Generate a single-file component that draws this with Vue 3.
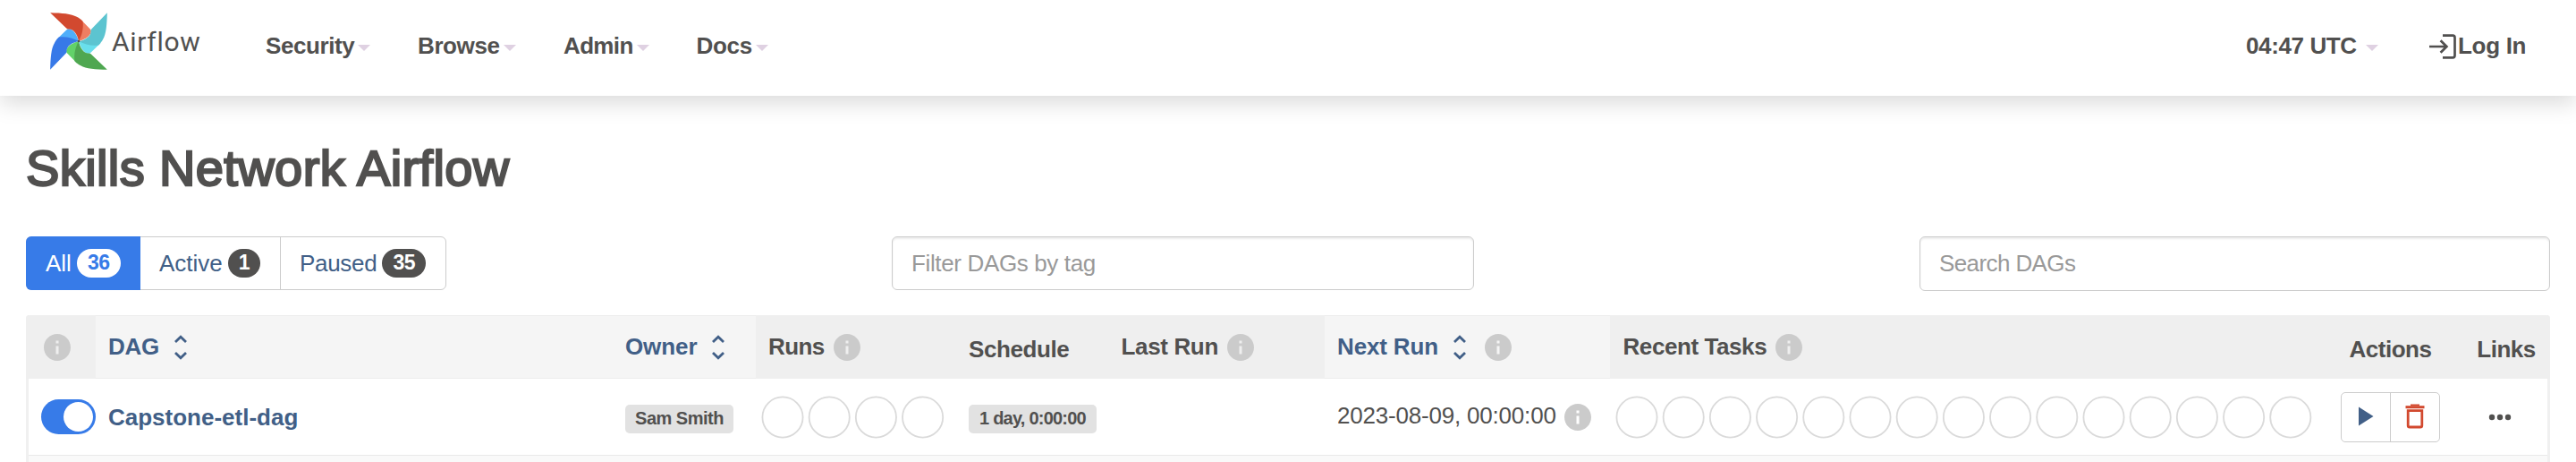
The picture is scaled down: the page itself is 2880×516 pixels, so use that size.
<script setup>
const menu = [
  { label: 'Security', width: 170, tracking: -0.41 },
  { label: 'Browse', width: 163, tracking: -0.4 },
  { label: 'Admin', width: 148.5, tracking: -0.65 },
  { label: 'Docs', width: 120, tracking: -0.3 },
]

const blades = [
  { dark: '#d2492f', light: '#ef7e62', angle: 0 },
  { dark: '#5cc4d0', light: '#69dfec', angle: 90 },
  { dark: '#4fa751', light: '#62d269', angle: 180 },
  { dark: '#3779e8', light: '#4faefa', angle: 270 },
]

const columns = [
  { key: 'toggle', info: true },
  { key: 'dag', label: 'DAG', sort: true, tracking: -0.3 },
  { key: 'owner', label: 'Owner', sort: true, tracking: -0.1 },
  { key: 'runs', label: 'Runs', info: true, tracking: -0.6 },
  { key: 'schedule', label: 'Schedule', low: true, tracking: -0.4 },
  { key: 'last', label: 'Last Run', info: true, tracking: -0.35 },
  { key: 'next', label: 'Next Run', sort: true, info: true, tracking: -0.15 },
  { key: 'recent', label: 'Recent Tasks', info: true, tracking: -0.42 },
  { key: 'actions', label: 'Actions', low: true, tracking: -0.5 },
  { key: 'links', label: 'Links', low: true, tracking: -0.5 },
]

const infoPath =
  'M12 2C6.48 2 2 6.48 2 12s4.48 10 10 10 10-4.48 10-10S17.52 2 12 2zm1 15h-2v-6h2v6zm0-8h-2V7h2v2z'
</script>

<template>
  <div class="page">
    <header class="nav">
      <div class="brand">
        <svg class="pinwheel" viewBox="168.5 42.5 192 192">
          <g v-for="b in blades" :key="'l' + b.angle" :transform="`rotate(${b.angle} 264.5 138.5)`">
            <path :fill="b.light" d="M270 64L303 98C311 106 305 127 264.5 138.5Z" />
          </g>
          <g v-for="b in blades" :key="'d' + b.angle" :transform="`rotate(${b.angle} 264.5 138.5)`">
            <path :fill="b.dark" d="M169 43C208 44 240 46 258 57C266 61 272 66 278 72C281 95 276 118 264.5 138.5C260 115 247 96 229 98Q226 98 223 95Z" />
          </g>
          <circle cx="264.5" cy="138.5" r="4" fill="#51504f" />
        </svg>
        <span class="wordmark">Airflow</span>
      </div>
      <nav class="menu">
        <a v-for="m in menu" :key="m.label" class="menu-item" :style="{ width: m.width + 'px' }">
          <span :style="{ letterSpacing: m.tracking + 'px' }">{{ m.label }}</span>
          <i class="caret"></i>
        </a>
      </nav>
      <div class="right">
        <a class="clock"><span>04:47 UTC</span><i class="caret"></i></a>
        <a class="login">
          <svg class="login-icon" viewBox="0 0 30 28" fill="none" stroke="#51504f" stroke-width="2.7">
            <path d="M15 1.6H26.2Q28.5 1.6 28.5 3.9V24Q28.5 26.3 26.2 26.3H15" />
            <path d="M0 14H19M12.6 7.2L19.4 14L12.6 20.8" />
          </svg>
          <span>Log In</span>
        </a>
      </div>
    </header>

    <main class="content">
      <h2 class="title">Skills Network Airflow</h2>

      <div class="toolbar">
        <div class="tabs">
          <a class="tab all">All<b class="count">36</b></a>
          <a class="tab active">Active<b class="count">1</b></a>
          <a class="tab paused"><span>Paused</span><b class="count">35</b></a>
        </div>
        <input class="field filter" placeholder="Filter DAGs by tag" />
        <input class="field search" placeholder="Search DAGs" />
      </div>

      <div class="table">
        <div class="row head">
          <div
            v-for="c in columns"
            :key="c.key"
            class="th"
            :class="[c.key, { sortable: c.sort, low: c.low }]"
          >
            <span v-if="c.label" :style="{ letterSpacing: c.tracking + 'px' }">{{ c.label }}</span>
            <svg v-if="c.sort" class="sort" viewBox="0 0 14 28" fill="none" stroke="#415f87" stroke-width="2.8">
              <path d="M1 8L7 2.2L13 8M1 20L7 25.8L13 20" />
            </svg>
            <svg v-if="c.info" class="info" viewBox="2 2 20 20"><path :d="infoPath" /></svg>
          </div>
        </div>

        <div class="row body">
          <div class="td toggle"><span class="switch"><i class="knob"></i></span></div>
          <div class="td dag">Capstone-etl-dag</div>
          <div class="td owner"><span class="label sam">Sam Smith</span></div>
          <div class="td runs">
            <svg class="circles" width="210" height="48">
              <circle v-for="n in 4" :key="n" :cx="24 + (n - 1) * 52.2" cy="24" r="22.6" />
            </svg>
          </div>
          <div class="td schedule"><span class="label every">1 day, 0:00:00</span></div>
          <div class="td last"></div>
          <div class="td next">
            <span class="date">2023-08-09, 00:00:00</span>
            <svg class="info" viewBox="2 2 20 20"><path :d="infoPath" /></svg>
          </div>
          <div class="td recent">
            <svg class="circles" width="780" height="48">
              <circle v-for="n in 15" :key="n" :cx="24 + (n - 1) * 52.2" cy="24" r="22.6" />
            </svg>
          </div>
          <div class="td actions">
            <div class="buttons">
              <a class="btn">
                <svg width="18" height="22" viewBox="0 0 18 22"><path d="M1 0.5V21.5L17.5 11Z" fill="#415f87" /></svg>
              </a>
              <a class="btn">
                <svg width="22" height="28" viewBox="0 0 22 28" fill="none" stroke="#d2492f">
                  <path d="M0.5 3.7H21.5" stroke-width="3" />
                  <path d="M6 1.4H16" stroke-width="1.8" />
                  <path d="M3.2 7.7H18.8V24.2Q18.8 26 17 26H5Q3.2 26 3.2 24.2Z" stroke-width="2.8" />
                </svg>
              </a>
            </div>
          </div>
          <div class="td links">
            <svg width="26" height="8" fill="#51504f">
              <circle cx="4" cy="4" r="3.2" /><circle cx="13" cy="4" r="3.2" /><circle cx="22" cy="4" r="3.2" />
            </svg>
          </div>
        </div>
        <div class="next-row"></div>
      </div>
    </main>
  </div>
</template>

<style>
body {
  background: #fff;
  overflow: hidden;
}
</style>

<style scoped>
.page {
  width: 2880px;
  height: 516px;
  overflow: hidden;
  background: #fff;
  color: #51504f;
  font-family: 'Liberation Sans', Arial, sans-serif;
  font-size: 26px;
  white-space: nowrap;
}
.page * {
  box-sizing: border-box;
}
svg {
  display: block;
  flex: none;
}
.nav {
  height: 107px;
  padding: 0 0 5px 56px;
  display: flex;
  align-items: center;
  font-weight: 700;
  background: #fff;
  box-shadow: 0 8px 24px rgba(0, 0, 0, 0.15);
}
.brand {
  width: 241px;
  margin-bottom: 10px;
  display: flex;
  align-items: center;
}
.pinwheel {
  width: 64px;
  height: 64px;
}
.wordmark {
  margin-left: 5px;
  padding-top: 1px;
  font-family: Roboto, sans-serif;
  font-size: 30px;
  font-weight: 400;
  letter-spacing: 0.7px;
}
.menu {
  display: flex;
}
.menu-item,
.clock,
.login {
  display: flex;
  align-items: center;
}
.caret {
  margin: 5px 0 0 4px;
  border-top: 7px solid #dfd1e2;
  border-left: 7px solid transparent;
  border-right: 7px solid transparent;
}
.right {
  margin-left: auto;
  display: flex;
  width: 369px;
}
.clock {
  width: 205px;
  letter-spacing: -0.38px;
}
.clock .caret {
  margin-left: 10px;
}
.login {
  letter-spacing: -0.3px;
}
.login-icon {
  width: 30px;
  height: 28px;
  margin: 2px 2px 0 0;
}
.content {
  padding: 51px 29px 0;
}
.title {
  margin: 0 0 46px;
  height: 60px;
  line-height: 60px;
  font-size: 56px;
  font-weight: 400;
  letter-spacing: 0.39px;
  -webkit-text-stroke: 2.3px #51504f;
  font-variant-ligatures: none;
}
.toolbar {
  display: flex;
  justify-content: space-between;
  height: 60px;
}
.tabs {
  display: flex;
  width: 470px;
  border: 1px solid #ccc;
  border-radius: 6px;
  color: #415f87;
}
.tab {
  display: flex;
  align-items: center;
}
.tab.all {
  width: 128px;
  margin: -1px 0 -1px -1px;
  padding-left: 22px;
  color: #fff;
  background: #377be8;
  border-radius: 6px 0 0 6px;
}
.tab.active {
  width: 157px;
  padding-left: 21px;
  border-right: 1px solid #ccc;
}
.tab.paused {
  padding-left: 21px;
}
.tab.paused span {
  letter-spacing: -0.3px;
}
.count {
  margin-left: 6px;
  height: 32px;
  padding: 0 12px;
  line-height: 31px;
  border-radius: 16px;
  font-size: 23px;
  letter-spacing: -0.4px;
  color: #fff;
  background: #51504f;
}
.all .count {
  color: #377be8;
  background: #fff;
}
.field {
  height: 60px;
  padding: 0 21px;
  border: 1px solid #ccc;
  border-radius: 6px;
  outline: none;
  background: #fff;
  box-shadow: inset 0 2px 2px rgba(0, 0, 0, 0.075);
  font: 26px 'Liberation Sans', Arial, sans-serif;
}
.field::placeholder {
  color: #999;
  opacity: 1;
}
.filter {
  width: 651px;
  letter-spacing: -0.36px;
}
.search {
  width: 705px;
  height: 61px;
  letter-spacing: -0.6px;
}
.table {
  margin-top: 28px;
  height: 180px;
  border: solid #f0f0f0;
  border-width: 0 3px;
  border-radius: 4px 4px 0 0;
}
.row {
  display: grid;
  grid-template-columns: 75px 578px 160px 223px 171px 242px 319px 794px 157px 97px;
}
.row > div {
  display: flex;
  align-items: center;
  padding-left: 14px;
}
.head {
  height: 71px;
  margin: 0 -3px;
  padding: 0 3px;
  font-weight: 700;
  background: #efefef;
  border-radius: 4px 4px 0 0;
}
.th.sortable {
  color: #415f87;
  background: #f5f5f5;
  border: solid #ededed;
  border-width: 1px 0;
}
.row > .low {
  padding-top: 6px;
}
.th .info {
  margin-left: 10px;
}
.row > .th.last,
.row > .th.recent {
  padding-left: 14.5px;
}
.row > .th.toggle {
  padding: 0 0 0 17px;
}
.th.toggle .info {
  margin: 0;
}
.info {
  width: 30px;
  height: 30px;
  fill: #cbcbcb;
}
.sort {
  width: 14px;
  height: 28px;
  margin-left: 17px;
}
.next .sort + .info {
  margin-left: 21px;
}
.row > .schedule {
  padding-left: 15px;
}
.row > .actions,
.row > .links {
  justify-content: center;
  padding-left: 0;
}
.row > .th.links {
  padding-left: 5px;
}
.body {
  height: 85px;
}
.row > .td.toggle {
  padding: 0 0 0 14px;
}
.switch {
  width: 61px;
  height: 39px;
  padding: 3px;
  display: flex;
  justify-content: flex-end;
  border-radius: 20px;
  background: #377be8;
}
.knob {
  width: 33px;
  height: 33px;
  border-radius: 50%;
  background: #fff;
}
.row > .td.dag {
  padding-top: 1px;
  color: #415f87;
  font-weight: 700;
}
.label {
  height: 32px;
  margin-top: 5px;
  line-height: 31px;
  border-radius: 5px;
  text-align: center;
  font-size: 20px;
  font-weight: 700;
  background: #e2e2e2;
}
.sam {
  width: 121px;
  letter-spacing: -0.5px;
}
.every {
  width: 143px;
  letter-spacing: -0.77px;
}
.row > .td.runs,
.row > .td.recent {
  padding-left: 5.5px;
}
.circles {
  fill: none;
  stroke: #dadada;
  stroke-width: 1.8;
}
.date {
  margin-bottom: 3px;
  letter-spacing: -0.2px;
}
.td .info {
  margin-left: 9px;
}
.buttons {
  display: flex;
  width: 111px;
  height: 56px;
  border: 1px solid #ccc;
  border-radius: 5px;
}
.btn {
  flex: 1;
  display: flex;
  align-items: center;
  justify-content: center;
  padding-bottom: 2px;
}
.btn + .btn {
  border-left: 1px solid #ccc;
}
.row > .td.links {
  padding-right: 9px;
}
.next-row {
  height: 24px;
  border-top: 1px solid #e9e9e9;
  background: #f9f9f9;
}
</style>
